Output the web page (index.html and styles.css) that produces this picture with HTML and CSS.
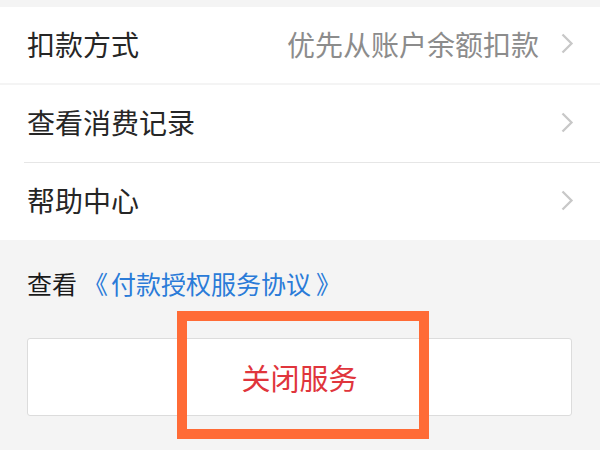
FILE: index.html
```html
<!DOCTYPE html>
<html lang="zh-CN">
<head>
<meta charset="utf-8">
<title>服务设置</title>
<link rel="stylesheet" href="styles.css">
</head>
<body>
<div class="page">
  <div class="group group-first">
    <div class="row">
      <span class="label">扣款方式</span>
      <span class="value">优先从账户余额扣款</span>
      <svg class="chev" width="13" height="21" viewBox="0 0 13 21"><path d="M1.5 1.5 L10.5 10.5 L1.5 19.5" fill="none" stroke="#c8c8c8" stroke-width="2.3"/></svg>
    </div>
  </div>
  <div class="group">
    <div class="row">
      <span class="label">查看消费记录</span>
      <svg class="chev" width="13" height="21" viewBox="0 0 13 21"><path d="M1.5 1.5 L10.5 10.5 L1.5 19.5" fill="none" stroke="#c8c8c8" stroke-width="2.3"/></svg>
    </div>
    <div class="divider"></div>
    <div class="row">
      <span class="label">帮助中心</span>
      <svg class="chev" width="13" height="21" viewBox="0 0 13 21"><path d="M1.5 1.5 L10.5 10.5 L1.5 19.5" fill="none" stroke="#c8c8c8" stroke-width="2.3"/></svg>
    </div>
  </div>
  <p class="agreement">查看<a class="link" href="#"><span class="bracket bracket-open">《</span>付款授权服务协议<span class="bracket bracket-close">》</span></a></p>
  <div class="btn">关闭服务</div>
  <div class="highlight"></div>
</div>
</body>
</html>
```
FILE: styles.css
```css
html, body {
  margin: 0;
  padding: 0;
  background: #f4f4f4;
}
.page {
  position: relative;
  width: 600px;
  height: 450px;
  overflow: hidden;
  padding-top: 7px;
  box-sizing: border-box;
  font-family: "Noto Sans CJK SC", "Noto Sans", sans-serif;
}
.group {
  background: #fff;
}
.group-first {
  margin-bottom: 2px;
}
.group-first .row {
  height: 76px;
}
.row {
  height: 77px;
  display: flex;
  align-items: center;
  padding: 0 26px 0 27px;
}
.label {
  font-size: 28px;
  color: #262626;
  flex: 1;
  line-height: 1;
  margin-top: -3px;
}
.value {
  font-size: 28px;
  color: #8c8c8c;
  line-height: 1;
  margin-right: 22px;
  margin-top: -3px;
}
.chev {
  display: block;
  margin-top: -3px;
}
.divider {
  height: 1px;
  background: #e6e6e6;
  margin-left: 24px;
}
.agreement {
  margin: 28px 0 0 27px;
  font-size: 25px;
  line-height: 30px;
  color: #1a1a1a;
}
.link {
  color: #2a7bd8;
  text-decoration: none;
}
.bracket-open {
  margin: 0 3px 0 6px;
}
.bracket-close {
  margin: 0 0 0 5px;
}
.btn {
  margin: 40px 28px 0 27px;
  height: 76px;
  border: 1px solid #dcdcdc;
  border-radius: 3px;
  background: #fff;
  display: flex;
  align-items: center;
  justify-content: center;
  font-size: 29px;
  color: #e0353c;
}
.highlight {
  position: absolute;
  left: 177px;
  top: 311px;
  width: 232px;
  height: 108px;
  border: 10px solid #ff6b36;
}
```
